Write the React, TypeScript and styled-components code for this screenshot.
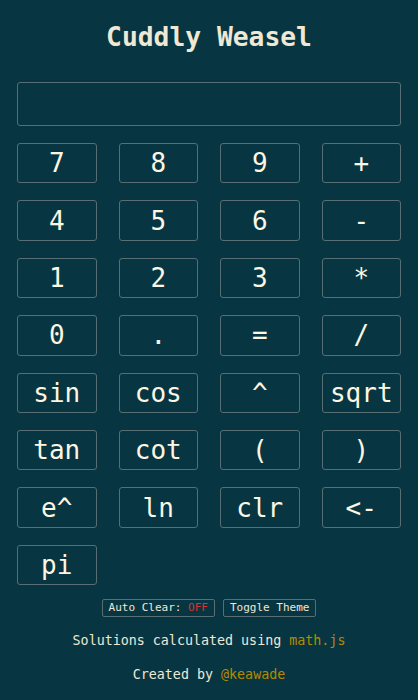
import React, { useState } from 'react';
import styled, { createGlobalStyle } from 'styled-components';

const GlobalStyle = createGlobalStyle`
  html, body {
    margin: 0;
    padding: 0;
    background: #073642;
  }
  body {
    font-family: 'DejaVu Sans Mono', monospace;
    color: #eee8d5;
  }
`;

const Page = styled.div`
  display: flex;
  flex-direction: column;
  padding: 0 17px;
  min-height: 700px;
  box-sizing: border-box;
`;

const Title = styled.h1`
  margin: 21px 0 29px;
  font-size: 26.3px;
  line-height: 32px;
  font-weight: 700;
  text-align: center;
  color: #eee8d5;
`;

const Display = styled.input`
  box-sizing: border-box;
  width: 100%;
  height: 44px;
  margin: 0 0 17px;
  padding: 0 12px;
  background: transparent;
  border: 1px solid #586e75;
  border-radius: 3px;
  color: #fdf6e3;
  font-family: inherit;
  font-size: 26px;
  outline: none;
`;

const Keypad = styled.div`
  display: grid;
  grid-template-columns: repeat(4, 1fr);
  grid-auto-rows: 40.4px;
  column-gap: 22px;
  row-gap: 17px;
`;

const Key = styled.button`
  display: flex;
  align-items: center;
  justify-content: center;
  padding: 0;
  background: transparent;
  border: 1px solid #586e75;
  border-radius: 3px;
  color: #fdf6e3;
  font-family: 'DejaVu Sans Mono', monospace;
  font-size: 26px;
  cursor: pointer;
`;

const Options = styled.div`
  display: flex;
  justify-content: center;
  gap: 8px;
  margin-top: 14px;
`;

const SmallButton = styled.button`
  box-sizing: border-box;
  height: 18px;
  padding: 0 6px;
  background: transparent;
  border: 1px solid #586e75;
  border-radius: 2px;
  color: #eee8d5;
  font-family: 'DejaVu Sans Mono', monospace;
  font-size: 11px;
  line-height: 16px;
  cursor: pointer;
`;

const State = styled.span<{ on: boolean }>`
  color: ${(p) => (p.on ? '#859900' : '#dc322f')};
`;

const Note = styled.p`
  margin: 0;
  font-size: 13.33px;
  line-height: 16px;
  text-align: center;
  color: #eee8d5;
  &:first-of-type {
    margin-top: 16px;
  }
  & + & {
    margin-top: 18px;
  }
`;

const Link = styled.a`
  color: #b58900;
  text-decoration: none;
`;

const keys = [
  '7', '8', '9', '+',
  '4', '5', '6', '-',
  '1', '2', '3', '*',
  '0', '.', '=', '/',
  'sin', 'cos', '^', 'sqrt',
  'tan', 'cot', '(', ')',
  'e^', 'ln', 'clr', '<-',
  'pi',
];

export default function App() {
  const [value, setValue] = useState('');
  const [autoClear, setAutoClear] = useState(false);

  const press = (k: string) => {
    if (k === 'clr') setValue('');
    else if (k === '<-') setValue((v) => v.slice(0, -1));
    else if (k !== '=') setValue((v) => v + k);
  };

  return (
    <Page>
      <GlobalStyle />
      <Title>Cuddly Weasel</Title>
      <Display value={value} onChange={(e) => setValue(e.target.value)} />
      <Keypad>
        {keys.map((k) => (
          <Key key={k} type="button" onClick={() => press(k)}>
            {k}
          </Key>
        ))}
      </Keypad>
      <Options>
        <SmallButton type="button" onClick={() => setAutoClear(!autoClear)}>
          Auto Clear: <State on={autoClear}>{autoClear ? 'ON' : 'OFF'}</State>
        </SmallButton>
        <SmallButton type="button">Toggle Theme</SmallButton>
      </Options>
      <Note>
        Solutions calculated using <Link href="#">math.js</Link>
      </Note>
      <Note>
        Created by <Link href="#">@keawade</Link>
      </Note>
    </Page>
  );
}
